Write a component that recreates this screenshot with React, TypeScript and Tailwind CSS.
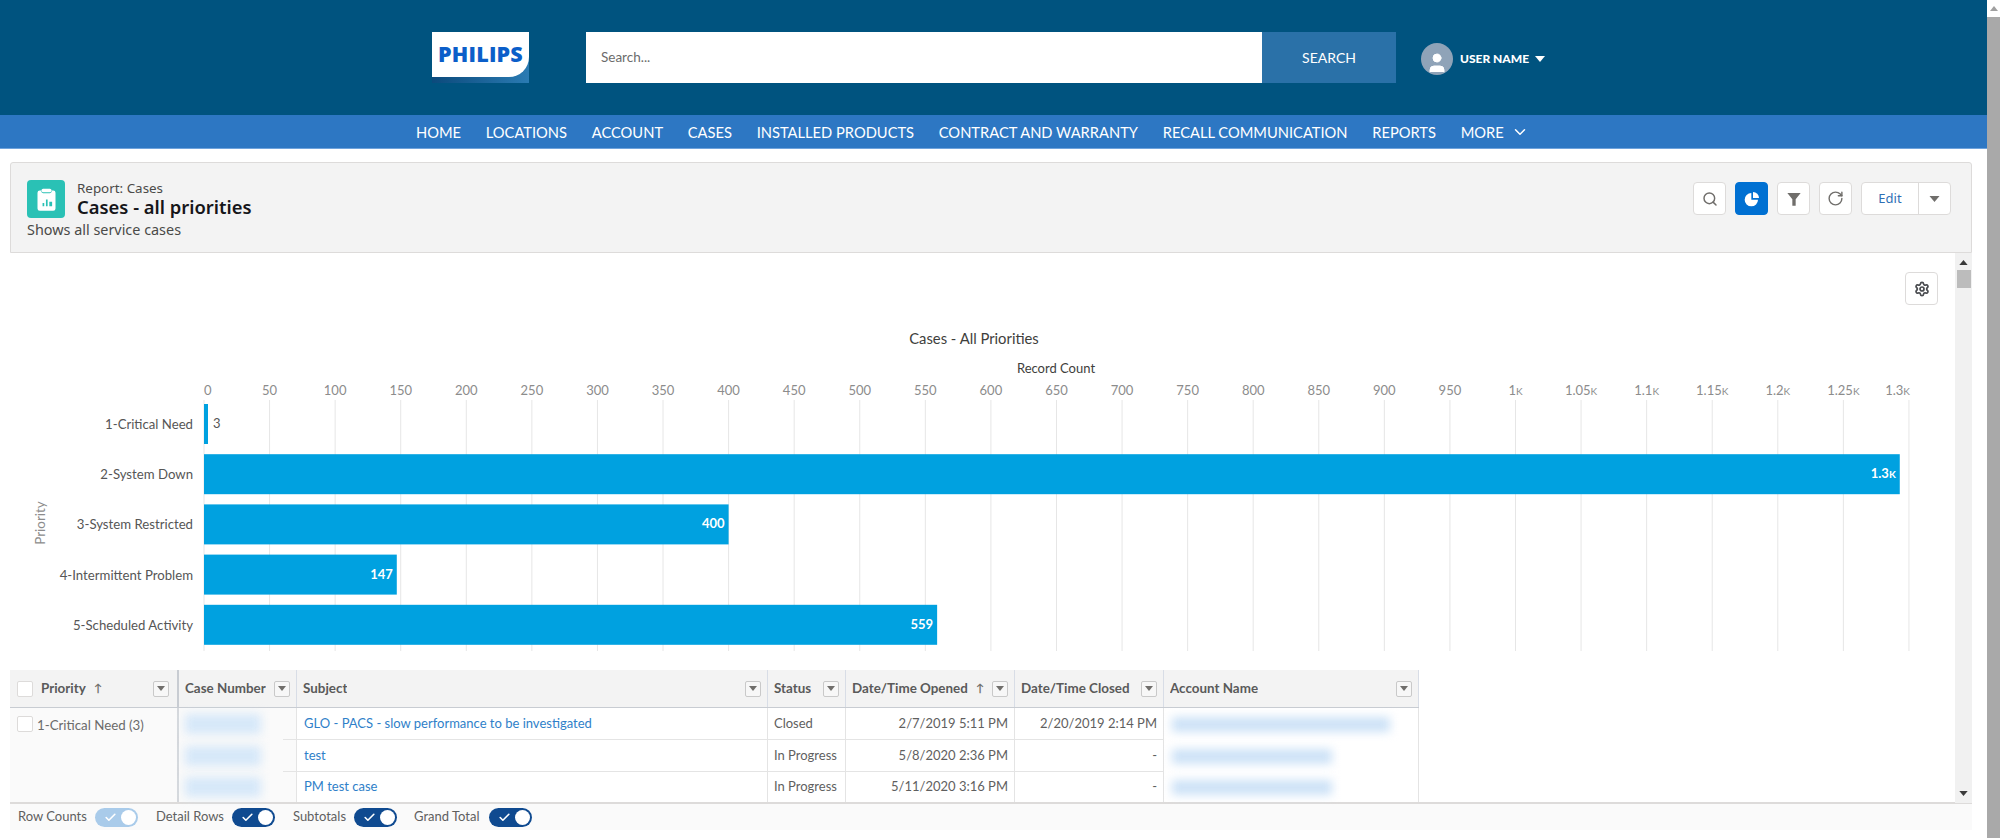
import { Check, ChevronDown, RotateCw, Search, Settings, User } from "lucide-react";

const navItems = ["HOME", "LOCATIONS", "ACCOUNT", "CASES", "INSTALLED PRODUCTS", "CONTRACT AND WARRANTY", "RECALL COMMUNICATION", "REPORTS"];

const ticks = [
  "0", "50", "100", "150", "200", "250", "300", "350", "400", "450", "500", "550", "600", "650", "700", "750", "800", "850", "900", "950",
  "1", "1.05", "1.1", "1.15", "1.2", "1.25", "1.3",
];

const bars = [
  { label: "1-Critical Need", value: 3 },
  { label: "2-System Down", value: 1293, text: "1.3" },
  { label: "3-System Restricted", value: 400 },
  { label: "4-Intermittent Problem", value: 147 },
  { label: "5-Scheduled Activity", value: 559 },
];

const rows = [
  { subject: "GLO - PACS - slow performance to be investigated", status: "Closed", opened: "2/7/2019 5:11 PM", closed: "2/20/2019 2:14 PM", acct: "w-[218px]" },
  { subject: "test", status: "In Progress", opened: "5/8/2020 2:36 PM", closed: "-", acct: "w-[160px]" },
  { subject: "PM test case", status: "In Progress", opened: "5/11/2020 3:16 PM", closed: "-", acct: "w-[160px]" },
];

const X0 = 204;
const PER_UNIT = 1.3115;

function Caret({ className = "" }: { className?: string }) {
  return (
    <svg viewBox="0 0 10 6" className={className} fill="currentColor">
      <path d="M0 0h10L5 6z" />
    </svg>
  );
}

function FilterBox() {
  return (
    <span className="flex h-4 w-4 shrink-0 items-center justify-center rounded-[2px] border border-[#c9c9c9] bg-[#f7f7f7] text-[#706e6b]">
      <Caret className="h-[5px] w-2" />
    </span>
  );
}

function IconButton({ children, active }: { children: React.ReactNode; active?: boolean }) {
  return (
    <button
      className={`flex h-[33px] w-[33px] items-center justify-center rounded-[4px] border ${
        active ? "border-[#0070d2] bg-[#0070d2] text-white" : "border-[#dddbda] bg-white text-[#706e6b]"
      }`}
    >
      {children}
    </button>
  );
}

function Toggle({ faded }: { faded?: boolean }) {
  return (
    <span className={`flex h-[19px] w-[43px] items-center justify-between rounded-full pl-[9px] pr-[2px] ${faded ? "bg-[#a9cbea]" : "bg-[#0f4a90]"}`}>
      <Check className="h-[13px] w-[13px] text-white" strokeWidth={3} />
      <span className="h-[15px] w-[15px] rounded-full bg-white" />
    </span>
  );
}

function HeaderCell({ label, sorted }: { label: string; sorted?: boolean }) {
  return (
    <div className="flex items-center border-r border-[#d8dde6] pl-[6px] pr-[6px] text-[13.4px] font-bold">
      <span className="truncate text-[#5a5a5a]">{label}</span>
      {sorted && <span className="ml-[8px] text-[11px] text-[#706e6b]">↑</span>}
      <span className="flex-1" />
      <FilterBox />
    </div>
  );
}

function Chart() {
  return (
    <svg width="1945" height="417" className="block font-['Lato',sans-serif]">
      <g transform="translate(-10,-253)">
        <text x="974" y="344" textAnchor="middle" fontSize="14.8" fill="#3e3e3c">Cases - All Priorities</text>
        <text x="1056" y="373" textAnchor="middle" fontSize="13" fill="#3e3e3c">Record Count</text>
        {ticks.map((t, i) => {
          const x = X0 + i * 50 * PER_UNIT;
          const kilo = i >= 20;
          const anchor = i === 0 ? "start" : i === 26 ? "end" : "middle";
          return (
            <g key={t}>
              <line x1={x} x2={x} y1={400} y2={651} stroke="#e6e6e6" strokeWidth="1" />
              <text x={i === 26 ? x + 1 : x} y={395} textAnchor={anchor} fontSize="13" fill="#8c8c8c">
                {t}
                {kilo && <tspan fontSize="10">K</tspan>}
              </text>
            </g>
          );
        })}
        <text transform="translate(45,523) rotate(-90)" textAnchor="middle" fontSize="13.4" fill="#8c8c8c">Priority</text>
        {bars.map((b, i) => {
          const y = 404 + i * 50.2;
          const w = b.value * PER_UNIT;
          return (
            <g key={b.label}>
              <text x="193" y={y + 25} textAnchor="end" fontSize="13.2" fill="#565656">{b.label}</text>
              <rect x={X0} y={y} width={Math.max(w, 4)} height="40" fill="#00a1e0" />
              {b.value < 10 ? (
                <text x={X0 + 9} y={y + 24} fontSize="13" fill="#565656">{b.value}</text>
              ) : (
                <text x={X0 + w - 4} y={y + 24} textAnchor="end" fontSize="13" fontWeight="700" fill="#ffffff">
                  {b.text ?? b.value}
                  {b.text && <tspan fontSize="10">K</tspan>}
                </text>
              )}
            </g>
          );
        })}
      </g>
    </svg>
  );
}

export default function App() {
  return (
    <div className="flex h-[838px] w-[2000px] overflow-hidden bg-white font-['Lato',sans-serif]">
      <div className="flex w-[1987px] flex-col">
        {/* top bar */}
        <div className="flex h-[115px] items-start bg-[#00537f] pt-[32px] pl-[432px]">
          <div className="h-[51px] w-[97px] bg-gradient-to-r from-[#0b4a7c] to-[#2a7bb3]">
            <div className="flex h-[45px] items-center justify-center rounded-br-[20px] bg-white font-['Open_Sans',sans-serif] text-[21.5px] font-extrabold tracking-[0.2px] text-[#0b5ec9]">
              PHILIPS
            </div>
          </div>
          <div className="ml-[57px] flex h-[51px] w-[810px]">
            <div className="flex w-[676px] items-center bg-white pl-[15px] text-[13.5px] text-[#6b6b6b]">Search...</div>
            <div className="flex w-[134px] items-center justify-center bg-[#2a71a8] text-[14px] text-white">SEARCH</div>
          </div>
          <div className="ml-[25px] mt-[11px] flex items-center">
            <span className="flex h-[32px] w-[32px] items-end justify-center overflow-hidden rounded-full bg-[#8fa3b8]">
              <User className="h-[24px] w-[24px] text-white" fill="white" strokeWidth={1} />
            </span>
            <span className="ml-[7px] text-[12px] font-black text-white">USER NAME</span>
            <Caret className="ml-[6px] h-[6px] w-[10px] text-white" />
          </div>
        </div>
        <div className="flex h-[34px] items-center gap-[24.7px] border-b border-[#6fa3dc] bg-[#2d77c3] pl-[416px] pt-[2px] text-[14.7px] text-white">
          {navItems.map((n) => (
            <span key={n}>{n}</span>
          ))}
          <span className="flex items-center gap-[7px]">
            MORE
            <ChevronDown className="h-[18px] w-[18px]" strokeWidth={2} />
          </span>
        </div>

        {/* page header */}
        <div className="ml-[10px] mt-[13px] flex h-[91px] w-[1962px] shrink-0 justify-between rounded-t-[3px] border border-[#dddbda] bg-[#f3f3f3] pl-[16px] pr-[20px] pt-[17px] font-['Noto_Sans',sans-serif]">
          <div>
            <div className="flex items-center gap-[12px]">
              <span className="flex h-[38px] w-[38px] items-center justify-center rounded-[4px] bg-[#2ac1b5]">
                <svg viewBox="0 0 24 24" className="h-[27px] w-[27px]" fill="white">
                  <path d="M9 2.500h6a1.500 1.500 0 0 1 0 3H9a1.500 1.500 0 0 1 0-3z" />
                  <path fillRule="evenodd" d="M6 4h1.200a2.500 2.500 0 0 0 1.800 2.500h6A2.500 2.500 0 0 0 16.800 4H18a2 2 0 0 1 2 2v14a2 2 0 0 1-2 2H6a2 2 0 0 1-2-2V6a2 2 0 0 1 2-2zm2.500 11v3h1.500v-3zm3-3v6h1.500v-6zm3 2v4H17v-4z" />
                </svg>
              </span>
              <div>
                <div className="text-[13.4px] leading-[16px] text-[#4a4a48]">Report: Cases</div>
                <div className="text-[18.4px] font-semibold leading-[22px] text-[#16161a]">Cases - all priorities</div>
              </div>
            </div>
            <div className="mt-[3px] text-[14.4px] leading-[18px] text-[#4a4a48]">Shows all service cases</div>
          </div>
          <div className="flex h-[33px] items-center gap-[9px] pt-[4px]">
            <IconButton>
              <Search className="h-[16px] w-[16px]" strokeWidth={2.2} />
            </IconButton>
            <IconButton active>
              <svg viewBox="0 0 24 24" className="h-[16px] w-[16px]" fill="white">
                <path d="M11 3a10 10 0 1 0 10 10H11z" />
                <path d="M13.500 1.500v9h9a9 9 0 0 0-9-9z" />
              </svg>
            </IconButton>
            <IconButton>
              <svg viewBox="0 0 24 24" className="h-[16px] w-[16px]" fill="currentColor">
                <path d="M2 3h20l-7.500 9.500V22h-5v-9.500z" />
              </svg>
            </IconButton>
            <IconButton>
              <RotateCw className="h-[17px] w-[17px]" strokeWidth={2} />
            </IconButton>
            <div className="flex h-[33px] rounded-[4px] border border-[#dddbda] bg-white">
              <span className="flex w-[56px] items-center justify-center text-[13px] text-[#2f6fb5]">Edit</span>
              <span className="flex w-[32px] items-center justify-center border-l border-[#dddbda] text-[#706e6b]">
                <Caret className="h-[6px] w-[11px]" />
              </span>
            </div>
          </div>
        </div>

        {/* report body */}
        <div className="ml-[10px] flex h-[550px] w-[1962px] shrink-0">
          <div className="flex w-[1945px] flex-col">
            <div className="relative h-[417px] shrink-0">
              <Chart />
              <button className="absolute left-[1895px] top-[19px] flex h-[33px] w-[33px] items-center justify-center rounded-[4px] border border-[#dddbda] bg-white text-[#4a4c50]">
                <Settings className="h-[16px] w-[16px]" strokeWidth={2.6} />
              </button>
            </div>
            <div className="grid grid-cols-[169px_118px_471px_78px_169px_149px_255px] grid-rows-[38px_32px_32px_30px] border-b border-[#dddbda]">
              <div className="flex items-center border-b border-r-2 border-[#c8ccd2] bg-[#f3f3f3] pl-[7px] pr-[8px] text-[13.4px] font-bold text-[#5a5a5a]">
                <span className="h-4 w-4 rounded-[2px] border border-[#dddbda] bg-white" />
                <span className="ml-[8px]">Priority</span>
                <span className="ml-[8px] text-[11px] text-[#706e6b]">↑</span>
                <span className="flex-1" />
                <FilterBox />
              </div>
              {["Case Number", "Subject", "Status", "Date/Time Opened", "Date/Time Closed", "Account Name"].map((h) => (
                <div key={h} className="grid border-b border-[#c8ccd2] bg-[#f3f3f3] last:border-r-2">
                  <HeaderCell label={h} sorted={h === "Date/Time Opened"} />
                </div>
              ))}
              <div className="row-span-3 flex items-start border-r-2 border-[#d5d8dc] bg-[#fafafa] pl-[7px] pt-[8px] text-[13.3px] text-[#6b6b6b]">
                <span className="h-4 w-4 rounded-[2px] border border-[#dddbda] bg-white" />
                <span className="ml-[4px]">1-Critical Need (3)</span>
              </div>
              {rows.map((r, i) => (
                <div key={r.subject} className="contents text-[13px] text-[#5f5f5f]">
                  <div className="flex items-center border-r border-[#e4e4e4] bg-[#fafafa]">
                    <span className="ml-[6px] h-[20px] w-[76px] bg-[#d6e8f9] blur-[5px]" />
                    <span className={`ml-auto w-[13px] self-end ${i < 2 ? "border-b border-[#e4e4e4]" : ""}`} />
                  </div>
                  <div className={`flex items-center border-r border-[#e4e4e4] pl-[7px] text-[#2f7fc9] ${i < 2 ? "border-b" : ""}`}>{r.subject}</div>
                  <div className={`flex items-center border-r border-[#e4e4e4] pl-[6px] ${i < 2 ? "border-b" : ""}`}>{r.status}</div>
                  <div className={`flex items-center justify-end border-r border-[#e4e4e4] pr-[6px] ${i < 2 ? "border-b" : ""}`}>{r.opened}</div>
                  <div className={`flex items-center justify-end border-r border-[#e4e4e4] pr-[6px] ${i < 2 ? "border-b" : ""}`}>{r.closed}</div>
                  <div className="flex items-center border-r border-[#e4e4e4] pl-[8px]">
                    <span className={`h-[15px] bg-[#cde2f7] blur-[5px] ${r.acct}`} />
                  </div>
                </div>
              ))}
            </div>
          </div>
          <div className="flex w-[17px] flex-col items-center bg-[#f1f1f1] pb-[7px] pt-[7px] text-[#3a3a3a]">
            <Caret className="h-[5px] w-[9px] rotate-180" />
            <div className="mt-[5px] h-[18px] w-[14px] bg-[#bcbcbc]" />
            <span className="flex-1" />
            <Caret className="h-[5px] w-[9px]" />
          </div>
        </div>

        {/* footer toggles */}
        <div className="ml-[10px] flex h-[27px] w-[1962px] shrink-0 items-center border-t border-[#dddbda] bg-[#fafafa] pl-[8px] text-[13px] text-[#5f5f5f]">
          <span>Row Counts</span>
          <span className="ml-[8px]"><Toggle faded /></span>
          <span className="ml-[18px]">Detail Rows</span>
          <span className="ml-[8px]"><Toggle /></span>
          <span className="ml-[18px]">Subtotals</span>
          <span className="ml-[8px]"><Toggle /></span>
          <span className="ml-[17px]">Grand Total</span>
          <span className="ml-[9px]"><Toggle /></span>
        </div>
      </div>

      {/* window scrollbar */}
      <div className="flex w-[13px] flex-col">
        <div className="flex h-[17px] items-center justify-center bg-white text-[#a0a0a0]">
          <Caret className="h-[5px] w-[8px] rotate-180" />
        </div>
        <div className="flex-1 bg-[#a9a9a9]" />
      </div>
    </div>
  );
}
